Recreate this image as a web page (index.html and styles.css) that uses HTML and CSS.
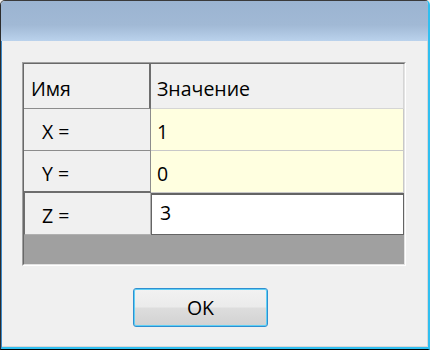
FILE: index.html
```html
<!DOCTYPE html>
<html>
<head>
<meta charset="utf-8">
<link rel="stylesheet" href="styles.css">
</head>
<body>
<div class="window">
  <div class="titlebar"></div>
  <div class="client">
    <div class="frame">
      <div class="grid">
        <div class="cell head name">Имя</div>
        <div class="cell head value">Значение</div>
        <div class="cell rowhead">X =</div>
        <div class="cell val">1</div>
        <div class="cell rowhead above-current">Y =</div>
        <div class="cell val">0</div>
        <div class="cell rowhead current">Z =</div>
        <div class="cell edit">3</div>
        <div class="empty"></div>
      </div>
    </div>
    <div class="actions">
      <button class="btn">OK</button>
    </div>
  </div>
</div>
</body>
</html>
```
FILE: styles.css
```css
* { box-sizing: border-box; }
html, body { margin: 0; padding: 0; background: #f0f0f0; }
body { font-family: "Open Sans", "Noto Sans", sans-serif; font-size: 19.5px; color: #000; }

.window {
  width: 430px;
  height: 350px;
  display: flex;
  flex-direction: column;
  border-top: 1px solid #3a3a3a;
  border-left: 1px solid #2c2c2c;
  border-right: 2px solid #30bff0;
  border-bottom: 1px solid #000;
  border-top-left-radius: 5px;
  border-top-right-radius: 5px;
  overflow: hidden;
}
.titlebar {
  height: 40px;
  flex: none;
  background: linear-gradient(#9bb4d1 0%, #a1b9d5 60%, #bad2ec 100%);
}
.client {
  flex: 1;
  background: #f0f0f0;
  border-left: 1px solid #3b89c9;
  border-bottom: 2px solid #30bff0;
  box-shadow: inset -1px -1px 0 #d8d8d8;
  padding: 21px 0 0 20px;
}
.frame {
  width: 384px;
  height: 204px;
  border-style: solid;
  border-width: 1px;
  border-color: #a0a0a0 #ffffff #ffffff #a0a0a0;
}
.grid {
  height: 202px;
  border-style: solid;
  border-width: 1px;
  border-color: #696969 #e3e3e3 #e3e3e3 #696969;
  display: grid;
  grid-template-columns: 127px 253px;
  grid-template-rows: 45px 42px 42px 42px 29px;
}
.cell {
  display: flex;
  align-items: center;
  padding-top: 5px;
  line-height: 26px;
}
.head {
  background: #f0f0f0;
}
.head.name {
  padding-left: 7px;
  border-right: 2px solid #6d6d6d;
  border-bottom: 1px solid #8c8c8c;
}
.head.value {
  padding-left: 6px;
  border-right: 1px solid #d5d5d5;
  border-bottom: 1px solid #d5d5d5;
}
.rowhead {
  background: #f0f0f0;
  padding-left: 18px;
  border-right: 1px solid #8c8c8c;
  border-bottom: 1px solid #8c8c8c;
}
.rowhead.above-current {
  border-bottom: 2px solid #6d6d6d;
}
.rowhead.current {
  border-left: 1px solid #6d6d6d;
  padding-left: 17px;
  border-right: 1px solid #b0b0b0;
  border-bottom: 1px solid #b0b0b0;
}
.val {
  background: #ffffe0;
  padding-left: 6px;
  border-right: 1px solid #c8c8c8;
  border-bottom: 1px solid #c8c8c8;
}
.edit {
  background: #fff;
  border: 1px solid #646464;
  border-top-width: 2px;
  padding-left: 8px;
  padding-top: 0;
  padding-bottom: 3px;
}
.empty {
  grid-column: 1 / 3;
  background: #a0a0a0;
}
.actions {
  padding-top: 22px;
  padding-left: 111px;
}
.btn {
  width: 135px;
  height: 39px;
  border: 1px solid #2f8fd0;
  border-radius: 3px;
  box-shadow: inset 0 0 0 1px #5fd0f5;
  background: linear-gradient(#f2f2f2 0%, #ebebeb 48%, #dddddd 52%, #d2d2d2 100%);
  font-family: "Open Sans", "Noto Sans", sans-serif;
  font-size: 19.5px;
  color: #000;
  padding: 0;
  line-height: 26px;
}
```
